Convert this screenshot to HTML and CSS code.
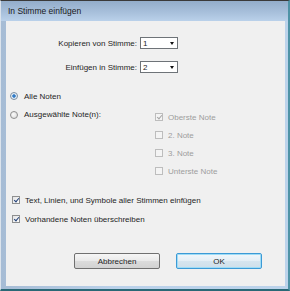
FILE: index.html
```html
<!DOCTYPE html>
<html lang="de">
<head>
    <meta charset="UTF-8">
    <title>In Stimme einfügen</title>
    <link rel="stylesheet" href="styles.css">
</head>
<body>
    <div class="window">
        <div class="titlebar">In Stimme einfügen</div>
        <div class="content">
            <div class="fields">
                <label class="field-label">Kopieren von Stimme:</label>
                <div class="select"><span>1</span><i class="arrow"></i></div>
                <label class="field-label">Einfügen in Stimme:</label>
                <div class="select"><span>2</span><i class="arrow"></i></div>
            </div>

            <div class="option all-row">
                <span class="radio checked"></span>
                <span>Alle Noten</span>
            </div>
            <div class="option selected-row">
                <span class="radio"></span>
                <span class="selected-label">Ausgewählte Note(n):</span>
                <div class="note-list">
                    <div class="option disabled"><span class="check checked"></span><span>Oberste Note</span></div>
                    <div class="option disabled"><span class="check"></span><span>2. Note</span></div>
                    <div class="option disabled"><span class="check"></span><span>3. Note</span></div>
                    <div class="option disabled"><span class="check"></span><span>Unterste Note</span></div>
                </div>
            </div>

            <div class="extras">
                <div class="option"><span class="check checked"></span><span>Text, Linien, und Symbole aller Stimmen einfügen</span></div>
                <div class="option"><span class="check checked"></span><span>Vorhandene Noten überschreiben</span></div>
            </div>

            <div class="buttons">
                <button class="btn">Abbrechen</button>
                <button class="btn default">OK</button>
            </div>
        </div>
    </div>
</body>
</html>
```

FILE: styles.css
```css
body {
    margin: 0;
    padding: 0;
    font-family: "Liberation Sans", Arial, sans-serif;
    font-size: 8px;
    color: #1e1e1e;
    background: #ffffff;
}
.window {
    width: 290px;
    height: 291px;
    box-sizing: border-box;
    display: flex;
    flex-direction: column;
    border-top: 1px solid #3a3a3a;
    border-left: 1px solid #dbe3ec;
    border-right: 2px solid #4f93a6;
    border-bottom: 2px solid #2a6876;
    background: linear-gradient(to right, #a6bcd5, #bad1ea 40%, #bcd3eb);
}
.titlebar {
    height: 20px;
    line-height: 20px;
    padding-left: 7px;
    font-size: 8.5px;
    color: #1a1a1a;
    background: linear-gradient(to bottom, #93adca, #a9c1dc 60%, #bad1ea);
}
.content {
    flex: 1;
    margin: 0 3px 3px 5px;
    padding-top: 16px;
    background: #f0f0f0;
}
.fields {
    display: grid;
    grid-template-columns: 131px 38px;
    column-gap: 3px;
    row-gap: 12px;
    align-items: center;
}
.field-label {
    text-align: right;
}
.select {
    height: 12px;
    box-sizing: border-box;
    border: 1px solid #6e7378;
    background: #fff;
    display: flex;
    align-items: center;
    padding: 0 3px 0 2px;
    justify-content: space-between;
}
.arrow {
    width: 0;
    height: 0;
    border-left: 2.5px solid transparent;
    border-right: 2.5px solid transparent;
    border-top: 3px solid #111;
}
.option {
    display: flex;
    align-items: center;
    height: 12px;
}
.all-row {
    margin-top: 17px;
}
.selected-row {
    margin-top: 7px;
    align-items: flex-start;
    height: auto;
}
.selected-row > .radio {
    margin-top: 2px;
}
.selected-label {
    width: 131px;
    line-height: 12px;
}
.radio {
    width: 8px;
    height: 8px;
    box-sizing: border-box;
    border-radius: 50%;
    border: 1px solid #8f8f8f;
    background: radial-gradient(circle at 40% 40%, #fafafa, #d8d8d8);
    margin: 0 6px 0 4px;
    position: relative;
}
.radio.checked {
    border-color: #7a8ea2;
    background: radial-gradient(circle, #2a6db5 0, #3c86cf 35%, #dfe9f3 45%, #f4f4f4 100%);
}
.note-list {
    margin-top: 2px;
    display: flex;
    flex-direction: column;
    gap: 6px;
}
.check {
    width: 8px;
    height: 8px;
    box-sizing: border-box;
    border: 1px solid #8e8f8f;
    background: linear-gradient(135deg, #e4e4e4, #fcfcfc);
    margin-right: 5px;
    position: relative;
}
.check.checked::after {
    content: "";
    position: absolute;
    left: 1.5px;
    top: 0;
    width: 2px;
    height: 4px;
    border-right: 1.2px solid #24427a;
    border-bottom: 1.2px solid #24427a;
    transform: rotate(40deg);
}
.disabled {
    color: #9d9d9d;
}
.disabled .check {
    border-color: #bdbdbd;
    background: #f4f4f4;
}
.disabled .check.checked::after {
    border-color: #a6a6a6;
}
.extras {
    margin-top: 17px;
    display: flex;
    flex-direction: column;
    gap: 7px;
}
.extras .check {
    margin-left: 6px;
}
.buttons {
    margin-top: 28px;
    padding-left: 68px;
    display: flex;
    gap: 16px;
}
.btn {
    width: 86px;
    height: 16px;
    padding: 0;
    font-family: inherit;
    font-size: 8px;
    color: #1e1e1e;
    border: 1px solid #707070;
    border-radius: 2px;
    background: linear-gradient(to bottom, #f6f6f6, #e9e9e9 50%, #dcdcdc 51%, #d2d2d2);
}
.btn.default {
    border-color: #3c9ad6;
    box-shadow: inset 0 0 0 1px #9fdcf6;
    background: linear-gradient(to bottom, #f1f7fb, #e4eef5 50%, #d6e5ef 51%, #cfdfea);
}
```
